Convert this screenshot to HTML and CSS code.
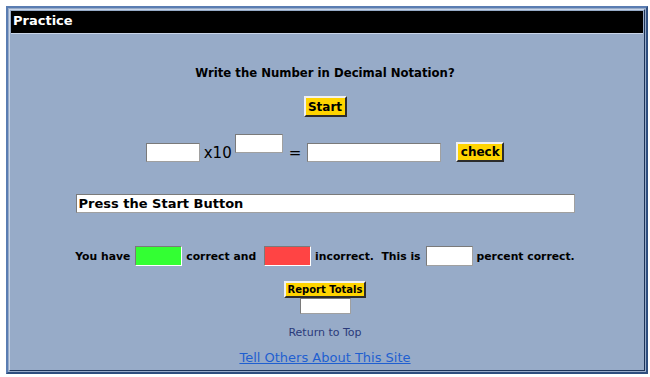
FILE: index.html
```html
<!DOCTYPE html>
<html lang="en">
<head>
    <meta charset="UTF-8">
    <title>Practice</title>
    <link rel="stylesheet" href="styles.css">
</head>
<body>

<div class="frame">
    <div class="panel">
        <div class="header">Practice</div>

        <div class="content">
            <div class="title">Write the Number in Decimal Notation?</div>

            <button class="btn btn-start">Start</button>

            <div class="problem">
                <input type="text" class="box box-coef">
                <span class="times">x10</span>
                <input type="text" class="box box-exp">
                <span class="equals">=</span>
                <input type="text" class="box box-answer">
                <button class="btn btn-check">check</button>
            </div>

            <input type="text" class="box status" value="Press the Start Button">

            <div class="score">
                <span>You have</span>
                <input type="text" class="box score-box good">
                <span>correct and</span>
                <input type="text" class="box score-box bad">
                <span>incorrect.&nbsp;&nbsp;This is</span>
                <input type="text" class="box score-box">
                <span>percent correct.</span>
            </div>

            <button class="btn btn-report">Report Totals</button>
            <input type="text" class="box box-report">

            <a class="top-link">Return to Top</a>
            <a class="tell-link" href="#">Tell Others About This Site</a>
        </div>
    </div>
</div>

</body>
</html>
```

FILE: styles.css
```css
body {
    margin: 6px 0 0 6px;
    font-family: "DejaVu Sans", Verdana, sans-serif;
    color: #000;
    background: #fff;
}

.frame {
    width: 636px;
    border: 2px solid #2e4e7e;
    border-top-color: #5a7db2;
    border-left-color: #5a7db2;
    background: #97abc8;
    padding: 1px;
}

.panel {
    border: 1px solid #1c3358;
    border-top-color: #c9d5e8;
    border-left-color: #c9d5e8;
    padding: 1px;
}

.header {
    background: #000;
    color: #fff;
    font-weight: bold;
    font-size: 13px;
    height: 22px;
    line-height: 20px;
    padding-left: 2px;
    border-bottom: 1px solid #c9d5e8;
}

.content {
    display: flex;
    flex-direction: column;
    align-items: center;
    padding: 0 4px 3px 0;
}

.title {
    margin-top: 31px;
    font-size: 11.7px;
    font-weight: bold;
    line-height: 16px;
}

.btn {
    background: #ffd400;
    border: 2px outset #f0f0f0;
    border-right-color: #808080;
    border-bottom-color: #808080;
    font-family: "DejaVu Sans", Verdana, sans-serif;
    font-weight: bold;
    color: #000;
    padding: 0 2px;
    cursor: pointer;
}

.btn-start {
    margin-top: 15px;
    height: 21px;
    font-size: 12px;
    width: 43px;
}

.box {
    border: 1px solid #7a7a7a;
    border-bottom-color: #a0a0a0;
    border-right-color: #a0a0a0;
    background: #fff;
    padding: 0 2px;
    box-sizing: border-box;
    font-family: "DejaVu Sans", Verdana, sans-serif;
}

.problem {
    margin-top: 17px;
    display: flex;
    align-items: flex-start;
    height: 28px;
    font-size: 15px;
}

.box-coef {
    margin-top: 9px;
    width: 54px;
    height: 19px;
}

.times {
    margin: 9px 3px 0 4px;
    line-height: 20px;
}

.box-exp {
    width: 48px;
    height: 19px;
}

.equals {
    margin: 9px 6px 0 6px;
    line-height: 20px;
}

.box-answer {
    margin-top: 9px;
    width: 134px;
    height: 19px;
}

.btn-check {
    margin: 8px 0 0 15px;
    height: 20px;
    width: 48px;
    font-size: 12px;
}

.status {
    margin-top: 32px;
    width: 499px;
    height: 19px;
    font-size: 13px;
    font-weight: bold;
    color: #000;
}

.score {
    margin-top: 33px;
    display: flex;
    align-items: center;
    font-size: 10.8px;
    font-weight: bold;
}

.score-box {
    width: 47px;
    height: 20px;
    margin: 0 4px 0 5px;
}

.good {
    background: #33ff33;
    border-color: #7a7a7a #fff #fff #7a7a7a;
}

.bad {
    background: #ff4444;
    border-color: #7a7a7a #fff #fff #7a7a7a;
    margin-left: 8px;
}

.btn-report {
    margin-top: 15px;
    height: 17px;
    font-size: 10px;
    padding: 0 2px;
    line-height: 12px;
}

.box-report {
    width: 51px;
    height: 16px;
}

.top-link {
    margin-top: 12px;
    font-size: 11px;
    line-height: 14px;
    color: #2a3a7a;
}

.tell-link {
    margin-top: 10px;
    font-size: 13px;
    line-height: 16px;
    color: #1f5fd0;
    text-decoration: underline;
}
```
